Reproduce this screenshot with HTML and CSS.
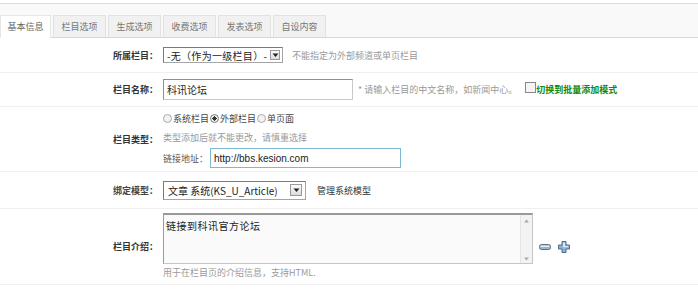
FILE: index.html
```html
<!DOCTYPE html>
<html lang="zh-CN">
<head>
<meta charset="utf-8">
<title>栏目</title>
<link rel="stylesheet" href="styles.css">
</head>
<body>
<div class="page">
  <div class="tabbar">
    <div class="tab active">基本信息</div>
    <div class="tab">栏目选项</div>
    <div class="tab">生成选项</div>
    <div class="tab">收费选项</div>
    <div class="tab">发表选项</div>
    <div class="tab">自设内容</div>
  </div>

  <div class="row r1">
    <div class="label">所属栏目：</div>
    <div class="field inline">
      <span class="select s1"><span class="sel-text">-无（作为一级栏目）-</span><span class="sel-btn"><svg width="7" height="5" viewBox="0 0 7 5"><path d="M0.5 0.5h6L3.5 4z" fill="#222"/></svg></span></span>
      <span class="hint">不能指定为外部频道或单页栏目</span>
    </div>
  </div>

  <div class="row r2">
    <div class="label">栏目名称：</div>
    <div class="field inline">
      <span class="input i1">科讯论坛</span>
      <span class="hint star">* 请输入栏目的中文名称，如新闻中心。</span>
      <span class="check"></span><span class="green">切换到批量添加模式</span>
    </div>
  </div>

  <div class="row r3">
    <div class="label">栏目类型：</div>
    <div class="field stack">
      <div class="radios">
        <span class="radio"></span><span class="rtext">系统栏目</span>
        <span class="radio on"></span><span class="rtext">外部栏目</span>
        <span class="radio"></span><span class="rtext">单页面</span>
      </div>
      <div class="hint line2">类型添加后就不能更改，请慎重选择</div>
      <div class="linkline">
        <span class="linklabel">链接地址：</span>
        <span class="input url">http://bbs.kesion.com</span>
      </div>
    </div>
  </div>

  <div class="row r4">
    <div class="label normal">绑定模型：</div>
    <div class="field inline">
      <span class="select s2"><span class="sel-text">文章 系统(KS_U_Article)</span><span class="sel-btn"><svg width="7" height="5" viewBox="0 0 7 5"><path d="M0.5 0.5h6L3.5 4z" fill="#222"/></svg></span></span>
      <span class="manage">管理系统模型</span>
    </div>
  </div>

  <div class="row r5">
    <div class="label">栏目介绍：</div>
    <div class="field stack">
      <div class="tawrap">
        <div class="textarea">
          <span class="ta-text">链接到科讯官方论坛</span>
          <span class="scroll">
            <svg width="5" height="4" viewBox="0 0 5 4"><path d="M0 3.5L2.5 0.5 5 3.5z" fill="#aaa"/></svg>
            <svg width="5" height="4" viewBox="0 0 5 4"><path d="M0 0.5h5L2.5 3.5z" fill="#aaa"/></svg>
          </span>
        </div>
        <span class="icons">
          <svg class="ico" width="12" height="8" viewBox="0 0 12 8"><rect x="0.5" y="1.5" width="11" height="5" rx="2" fill="#9fb3c4" stroke="#5b7388"/><rect x="1.5" y="2.5" width="9" height="1.5" rx="0.7" fill="#e4ecf3"/></svg>
          <svg class="ico" width="12" height="12" viewBox="0 0 12 12"><path d="M4 0.5h4v3.5h3.5v4H8v3.5H4V8H0.5V4H4z" fill="#8fb1cf" stroke="#4d6f91" stroke-linejoin="round"/><path d="M5 1.5h2v3.5h3.2v1.2H5z" fill="#dce8f3"/></svg>
        </span>
      </div>
      <div class="hint tahint">用于在栏目页的介绍信息，支持HTML.</div>
    </div>
  </div>
</div>
</body>
</html>
```

FILE: styles.css
```css
html, body {
  margin: 0;
  padding: 0;
  background: #fff;
}
body {
  font-family: "Noto Sans CJK SC", "Liberation Sans", sans-serif;
  font-size: 9px;
  color: #333;
}
.page {
  padding-top: 3px;
}
.tabbar {
  border-top: 1px solid #dcdcdc;
  background: #f9f9f9;
  height: 35px;
  border-bottom: 1px solid #d8d8d8;
  display: flex;
  align-items: flex-end;
  gap: 2px;
  box-sizing: border-box;
}
.tab {
  width: 53px;
  height: 22px;
  box-sizing: border-box;
  background: #f1f1f1;
  border: 1px solid #e2e2e2;
  border-bottom: none;
  color: #777;
  text-align: center;
  line-height: 21px;
}
.tab.active {
  background: #fff;
  color: #666;
  height: 23px;
  margin-bottom: -1px;
  border-color: #e6e6e6;
  width: 51px;
}
.row {
  display: grid;
  grid-template-columns: 163px 1fr;
  border-bottom: 1px solid #f0f0f0;
  box-sizing: border-box;
}
.r1 { height: 35px; }
.r2 { height: 34px; }
.r3 { height: 65px; }
.r4 { height: 37px; }
.r5 { height: 76px; }
.label {
  align-self: center;
  text-align: right;
  padding-right: 5px;
  font-weight: bold;
  color: #333;
}
.label.normal {
  color: #444;
}
.field.inline {
  display: flex;
  align-items: center;
}
.field.stack {
  display: flex;
  flex-direction: column;
}
.select {
  display: inline-flex;
  align-items: center;
  justify-content: space-between;
  box-sizing: border-box;
  background: #fff;
  border: 1px solid #a5a5a5;
  border-top-color: #7a7a7a;
  border-left-color: #7a7a7a;
  color: #222;
}
.s1 {
  width: 120px;
  height: 16px;
  padding-left: 3px;
  font-size: 10px;
  letter-spacing: 0.3px;
}
.s2 {
  width: 143px;
  height: 19px;
  padding-left: 4px;
  font-size: 10px;
}
.sel-btn {
  width: 10px;
  height: 10px;
  box-sizing: border-box;
  border: 1px solid #9a9a9a;
  background: linear-gradient(#fbfbfb, #dcdcdc);
  display: flex;
  align-items: center;
  justify-content: center;
  margin-right: 2px;
}
.s2 .sel-btn {
  width: 12px;
  height: 12px;
  margin-right: 3px;
}
.hint {
  color: #999;
}
.r1 .hint {
  margin-left: 9px;
}
.input {
  display: inline-flex;
  align-items: center;
  box-sizing: border-box;
  background: #fff;
  border: 1px solid #c8c8c8;
  border-top-color: #8f8f8f;
  border-left-color: #8f8f8f;
  color: #222;
}
.i1 {
  width: 190px;
  height: 21px;
  padding-left: 3px;
  font-size: 10px;
}
.star {
  margin-left: 5px;
}
.check {
  width: 9px;
  height: 9px;
  border: 1px solid #888;
  background: #f4f4f4;
  margin-left: 8px;
  align-self: center;
  margin-top: -5px;
}
.green {
  color: #108a10;
  font-weight: bold;
}
.r3 .field {
  padding-top: 2px;
}
.radios {
  display: flex;
  align-items: center;
  height: 19px;
  color: #444;
}
.radio {
  width: 7px;
  height: 7px;
  border-radius: 50%;
  border: 1px solid #aaa;
  background: #f2f2f2;
  margin-right: 1px;
}
.radio.on {
  border-color: #7d7d7d;
  background: radial-gradient(circle, #333 0 2px, #eee 2.2px);
}
.rtext {
  margin-right: 1px;
}
.line2 {
  height: 20px;
  line-height: 20px;
}
.linkline {
  display: flex;
  align-items: center;
  color: #555;
}
.linklabel {
  width: 47px;
}
.url {
  width: 191px;
  height: 20px;
  border: 1px solid #7fb9d1;
  padding-left: 3px;
  font-family: "Liberation Sans", Arial, sans-serif;
  font-size: 10px;
  color: #222;
}
.manage {
  margin-left: 11px;
  color: #333;
}
.r5 .field {
  padding-top: 4px;
}
.tawrap {
  display: flex;
  align-items: center;
}
.textarea {
  width: 370px;
  height: 51px;
  box-sizing: border-box;
  border: 1px solid #c6c6c6;
  border-top: 2px solid #9a9a9a;
  border-left-color: #9a9a9a;
  background: #fafafa;
  display: flex;
  justify-content: space-between;
}
.ta-text {
  padding: 3px 0 0 2px;
  font-size: 10px;
  letter-spacing: 0.5px;
  color: #222;
}
.scroll {
  width: 11px;
  border-left: 1px solid #e4e4e4;
  background: #f3f3f3;
  display: flex;
  flex-direction: column;
  justify-content: space-between;
  align-items: center;
  padding: 4px 0 2px;
}
.icons {
  display: flex;
  align-items: center;
  gap: 7px;
  margin-left: 6px;
  margin-top: 16px;
}
.tahint {
  margin-top: 2px;
  height: 14px;
  line-height: 14px;
  font-size: 9px;
}
```
